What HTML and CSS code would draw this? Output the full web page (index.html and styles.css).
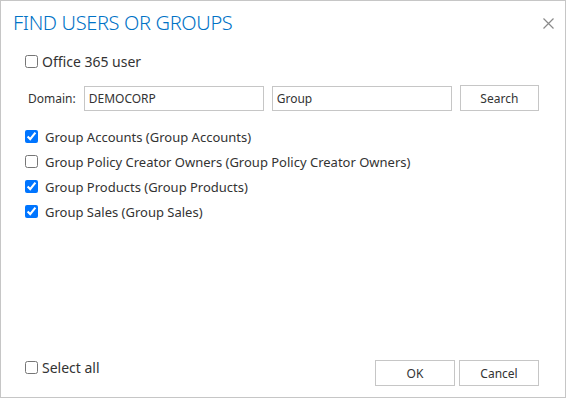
FILE: index.html
```html
<!DOCTYPE html>
<html lang="en">
<head>
  <meta charset="UTF-8" />
  <meta name="viewport" content="width=device-width, initial-scale=1" />
  <title>Find users or groups</title>
  <link rel="stylesheet" href="styles.css">
</head>
<body>
  <div class="dialog">
    <div class="header">
      <h1>FIND USERS OR GROUPS</h1>
      <button class="close" aria-label="Close">
        <svg width="11" height="11" viewBox="0 0 11 11">
          <path d="M0.5 0.5 L10.5 10.5 M10.5 0.5 L0.5 10.5" stroke="#8a8a8a" stroke-width="1.2" fill="none" />
        </svg>
      </button>
    </div>

    <label class="check office">
      <input type="checkbox" />
      <span>Office 365 user</span>
    </label>

    <div class="search-row">
      <span class="domain-label">Domain:</span>
      <input class="field" type="text" value="DEMOCORP" />
      <input class="field" type="text" value="Group" />
      <button class="btn">Search</button>
    </div>

    <div class="results">
      <label class="check">
        <input type="checkbox" checked />
        <span>Group Accounts (Group Accounts)</span>
      </label>
      <label class="check">
        <input type="checkbox" />
        <span>Group Policy Creator Owners (Group Policy Creator Owners)</span>
      </label>
      <label class="check">
        <input type="checkbox" checked />
        <span>Group Products (Group Products)</span>
      </label>
      <label class="check">
        <input type="checkbox" checked />
        <span>Group Sales (Group Sales)</span>
      </label>
    </div>

    <div class="footer">
      <label class="check select-all">
        <input type="checkbox" />
        <span>Select all</span>
      </label>
      <div class="actions">
        <button class="btn">OK</button>
        <button class="btn">Cancel</button>
      </div>
    </div>
  </div>
</body>
</html>
```

FILE: styles.css
```css
* {
  box-sizing: border-box;
  font-family: 'Noto Sans', 'Open Sans', sans-serif;
}

body {
  margin: 0;
  background: #fff;
}

.dialog {
  width: 566px;
  height: 398px;
  border: 1px solid #c6c6c6;
  display: flex;
  flex-direction: column;
  padding: 0 26px 0 24px;
  color: #333;
}

.header {
  display: flex;
  align-items: center;
  justify-content: space-between;
  height: 42px;
  margin-left: -12px;
  margin-right: -15px;
}

h1 {
  margin: 0;
  font-weight: 300;
  font-size: 20px;
  color: #0072c6;
  letter-spacing: -0.35px;
}

.close {
  border: none;
  background: none;
  padding: 0;
  width: 11px;
  height: 11px;
  display: flex;
  margin-top: 2px;
  cursor: pointer;
}

.check {
  display: flex;
  align-items: center;
  font-size: 13px;
  color: #333;
  height: 25px;
}

.check input {
  margin: 0 7px 0 0;
  width: 13px;
  height: 13px;
}

.office {
  margin-top: 6px;
  font-size: 14px;
}

.office input {
  margin-right: 4px;
}

.search-row {
  display: flex;
  align-items: center;
  margin-top: 11px;
  gap: 8px;
}

.domain-label {
  font-size: 12px;
  width: 51px;
  padding-left: 3px;
}

.field {
  width: 180px;
  height: 25px;
  border: 1px solid #c6c6c6;
  padding: 0 4px;
  font-size: 12px;
  color: #333;
  outline: none;
}

.btn {
  width: 80px;
  height: 26px;
  border: 1px solid #c6c6c6;
  background: #fff;
  font-size: 12px;
  color: #333;
  cursor: pointer;
}

.results {
  margin-top: 13px;
  flex: 1;
}

.footer {
  display: flex;
  justify-content: space-between;
  align-items: flex-start;
  padding-bottom: 11px;
}

.select-all {
  height: 14px;
  font-size: 14px;
}

.select-all input {
  margin-right: 4px;
}

.actions {
  display: flex;
  gap: 4px;
}
```
